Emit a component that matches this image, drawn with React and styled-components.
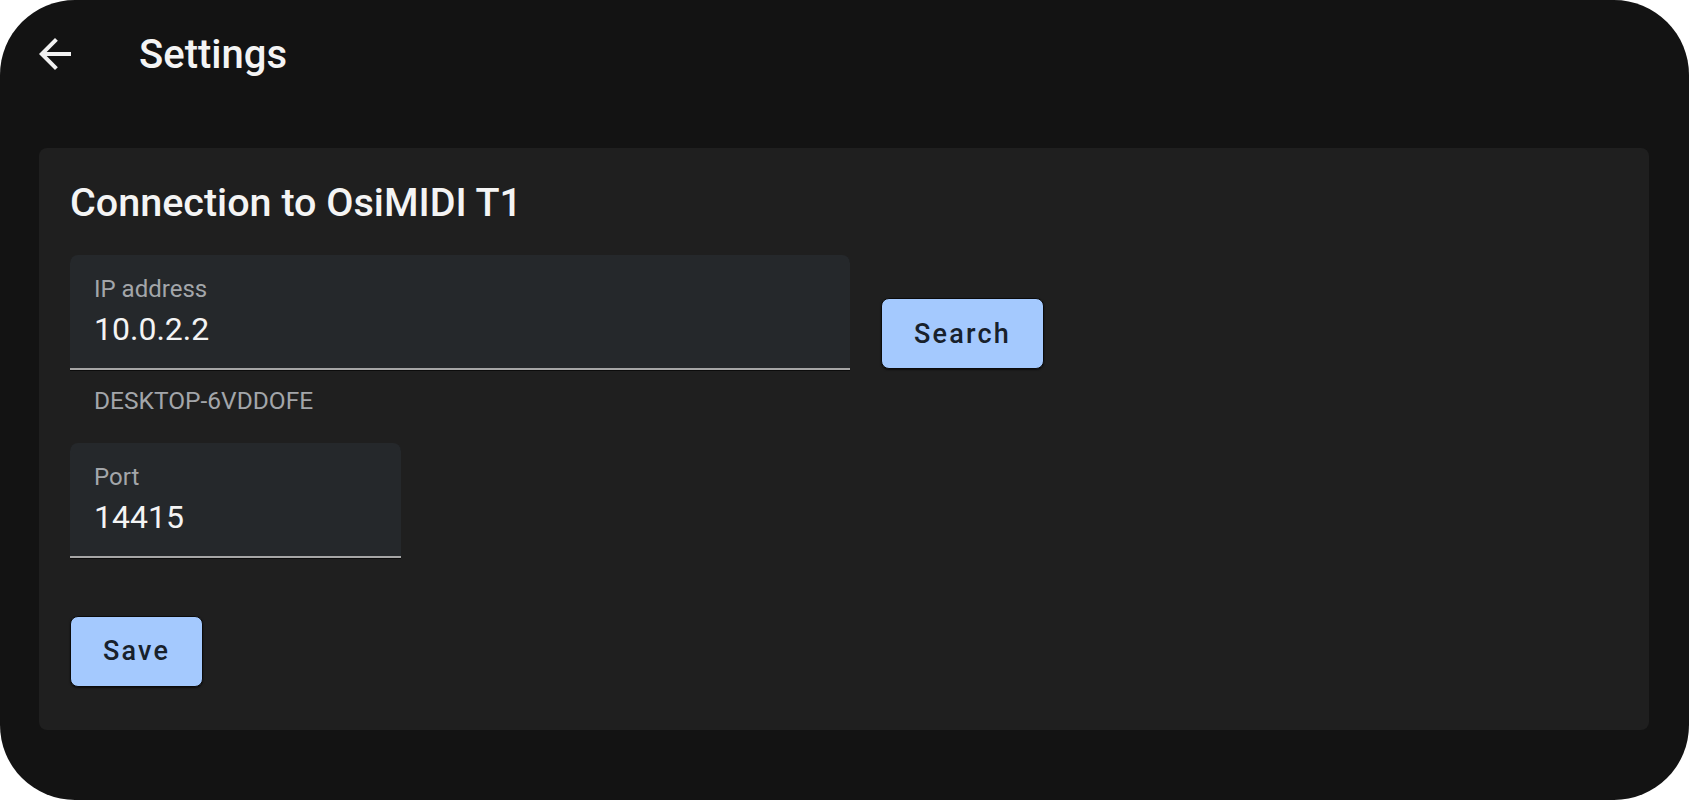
import React from "react";
import styled, { createGlobalStyle } from "styled-components";

const GlobalStyle = createGlobalStyle`
  html, body {
    margin: 0;
    padding: 0;
    background: #ffffff;
  }
  * {
    box-sizing: border-box;
  }
`;

const Frame = styled.div`
  width: 1689px;
  height: 800px;
  background: #131313;
  border-radius: 75px;
  overflow: hidden;
  font-family: Roboto, "Liberation Sans", sans-serif;
  color: #f2f2f2;
  display: flex;
  flex-direction: column;
`;

const AppBar = styled.header`
  height: 108px;
  display: flex;
  align-items: center;
  padding-left: 31px;
  gap: 60px;
`;

const BackButton = styled.button`
  width: 48px;
  height: 48px;
  padding: 0;
  border: 0;
  background: transparent;
  display: flex;
  align-items: center;
  justify-content: center;
  cursor: pointer;
`;

const PageTitle = styled.h1`
  margin: 2px 0 0;
  font-size: 40px;
  font-weight: 500;
  line-height: 1.2;
  color: #f4f4f4;
`;

const Card = styled.section`
  margin: 40px 40px 0 39px;
  background: #1f1f1f;
  border-radius: 8px;
  padding: 31px 31px 43px;
`;

const CardTitle = styled.h2`
  margin: 0 0 29px;
  font-size: 39.5px;
  font-weight: 500;
  line-height: 1.2;
  color: #f4f4f4;
`;

const FieldRow = styled.div`
  display: flex;
  align-items: center;
  gap: 31px;
`;

const FieldColumn = styled.div`
  width: ${(p) => p.$width}px;
  display: flex;
  flex-direction: column;
`;

const FieldBox = styled.div`
  height: 115px;
  background: #25282b;
  border-radius: 8px 8px 0 0;
  border-bottom: 2px solid #a6a6a6;
  box-shadow: 0 1px 0 #0c0c0c;
  padding: 20px 24px 0;
  display: flex;
  flex-direction: column;
  gap: 6px;
`;

const FieldLabel = styled.label`
  font-size: 24px;
  line-height: 1.2;
  color: #a3a6aa;
`;

const FieldValue = styled.div`
  font-size: 32px;
  line-height: 1.2;
  color: #f4f4f4;
`;

const Helper = styled.div`
  margin-top: 16px;
  padding-left: 24px;
  font-size: 24.5px;
  line-height: 1.2;
  color: #a3a6aa;
`;

const Gap = styled.div`
  height: ${(p) => p.$size}px;
`;

const ButtonRow = styled.div`
  display: flex;
`;

const FilledButton = styled.button`
  height: 71px;
  padding: 0 32px;
  margin-bottom: ${(p) => p.$lift || 0}px;
  background: #a4c9fe;
  border: 1.5px solid #0b0b0b;
  border-radius: 8px;
  box-shadow: 0 1px 2px rgba(0, 0, 0, 0.6);
  font-family: Roboto, "Liberation Sans", sans-serif;
  font-size: 27px;
  font-weight: 500;
  letter-spacing: 2.2px;
  color: #18212b;
  cursor: pointer;
`;

function ArrowBack() {
  return (
    <svg width="48" height="48" viewBox="0 0 24 24" fill="#f2f2f2">
      <path d="M20 11H7.83l5.59-5.59L12 4l-8 8 8 8 1.41-1.41L7.83 13H20v-2z" />
    </svg>
  );
}

export default function App() {
  return (
    <>
      <GlobalStyle />
      <Frame>
        <AppBar>
          <BackButton aria-label="Back">
            <ArrowBack />
          </BackButton>
          <PageTitle>Settings</PageTitle>
        </AppBar>
        <Card>
          <CardTitle>Connection to OsiMIDI T1</CardTitle>
          <FieldRow>
            <FieldColumn $width={780}>
              <FieldBox>
                <FieldLabel>IP address</FieldLabel>
                <FieldValue>10.0.2.2</FieldValue>
              </FieldBox>
              <Helper>DESKTOP-6VDDOFE</Helper>
            </FieldColumn>
            <FilledButton $lift={4}>Search</FilledButton>
          </FieldRow>
          <Gap $size={27} />
          <FieldColumn $width={331}>
            <FieldBox>
              <FieldLabel>Port</FieldLabel>
              <FieldValue>14415</FieldValue>
            </FieldBox>
          </FieldColumn>
          <Gap $size={58} />
          <ButtonRow>
            <FilledButton>Save</FilledButton>
          </ButtonRow>
        </Card>
      </Frame>
    </>
  );
}
